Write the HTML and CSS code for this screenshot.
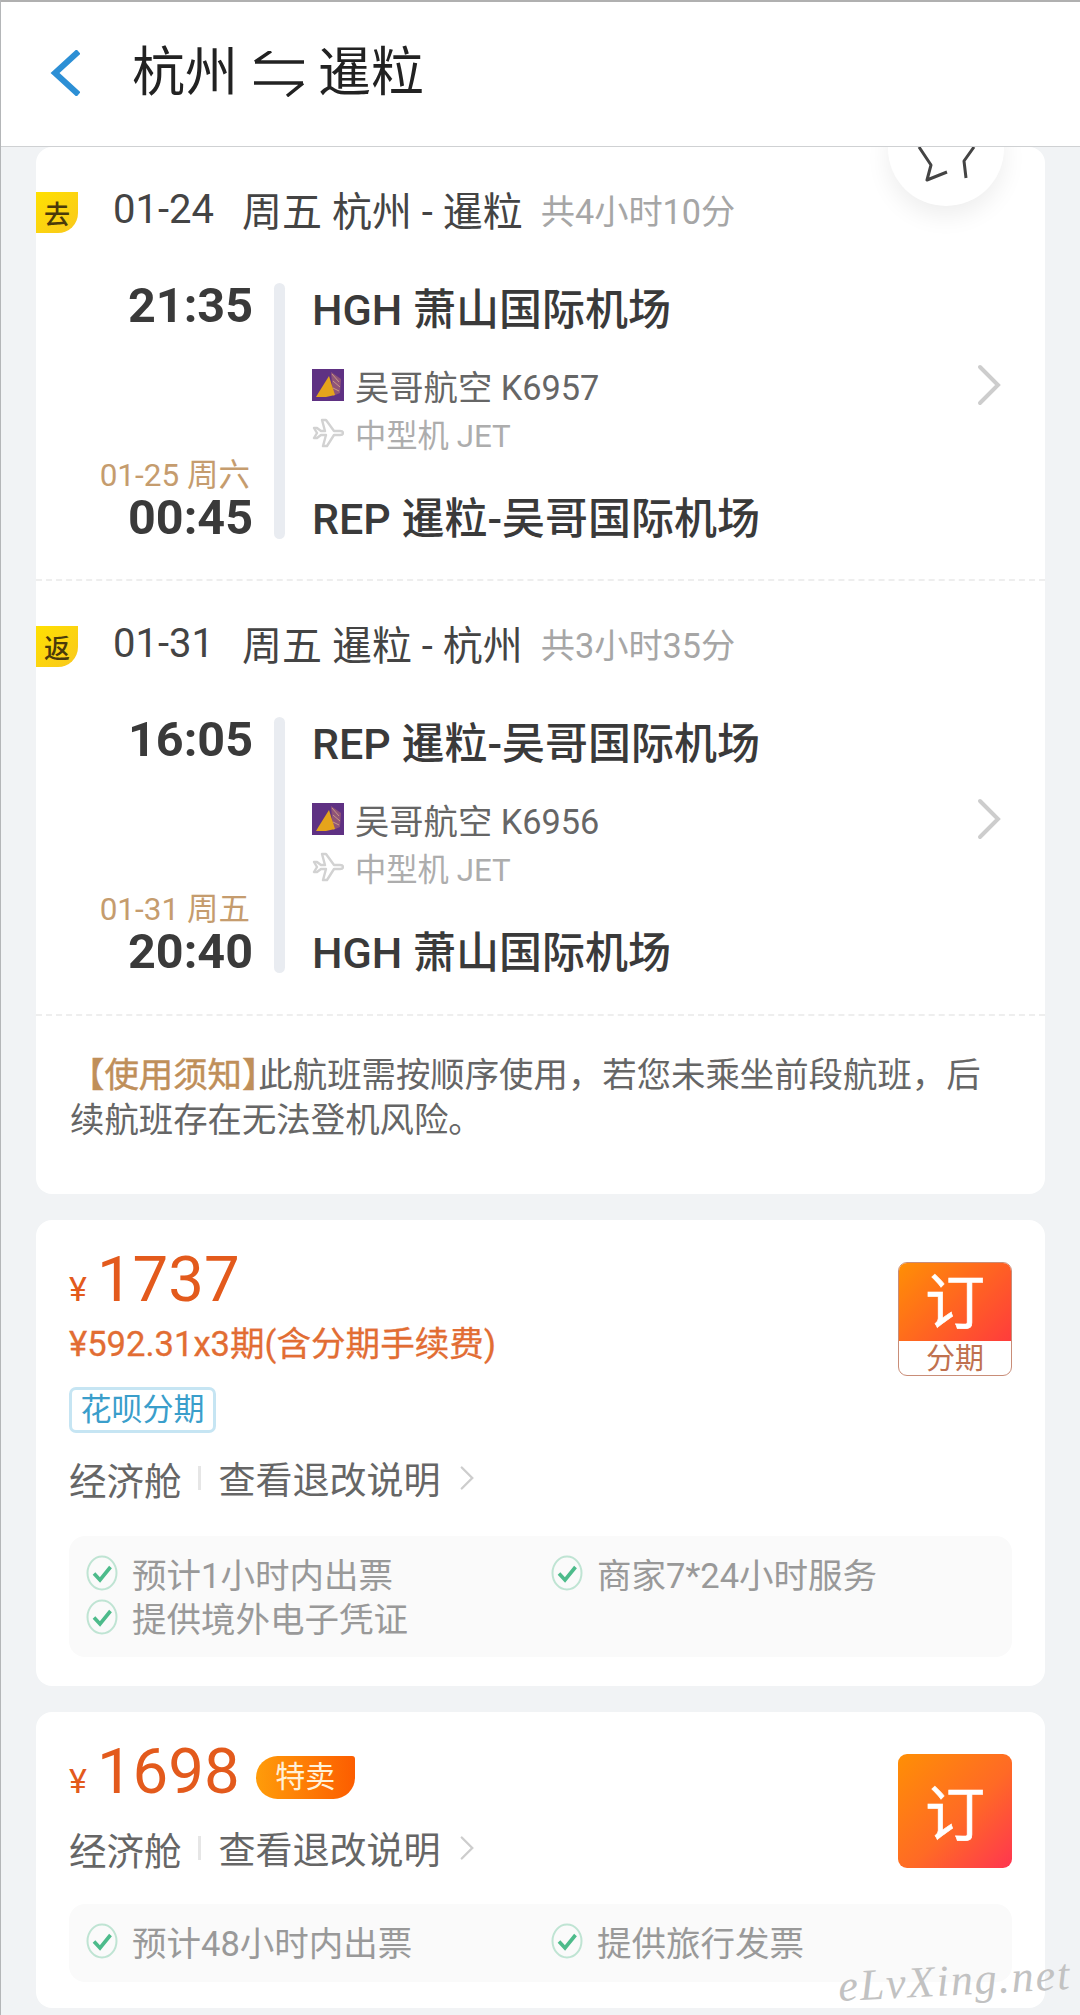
FILE: index.html
```html
<!DOCTYPE html>
<html lang="zh-CN">
<head>
<meta charset="utf-8">
<title>杭州 - 暹粒</title>
<link rel="stylesheet" href="styles.css">
</head>
<body>
<svg class="defs" width="0" height="0" aria-hidden="true">
  <defs>
    <symbol id="check" viewBox="0 0 32 36">
      <ellipse cx="16" cy="18" rx="14.5" ry="16.5" fill="none" stroke="#bfe4d3" stroke-width="2"/>
      <path d="M8 18.5l6 6.5L24.5 12" fill="none" stroke="#4dbb8b" stroke-width="3.6"/>
    </symbol>
    <symbol id="chev" viewBox="0 0 24 42">
      <path d="M3 3l18 18L3 39" fill="none" stroke="#cdcdcd" stroke-width="4" stroke-linecap="round"/>
    </symbol>
    <symbol id="logo" viewBox="0 0 32 32">
      <rect width="32" height="32" fill="#5f3183"/>
      <path d="M19 3l10 7-1 14-7 3z" fill="#8f5478"/>
      <path d="M20 5l7 8M21 12l7 6M21 19l6 3" stroke="#c99a84" stroke-width="1" fill="none"/>
      <path d="M4 28l3-5L17 7l6 19-9 2z" fill="#e5a41b"/>
    </symbol>
    <symbol id="plane" viewBox="0 0 32 32">
      <path d="M2 11l3 5-3 5h3l4-3h5l-3 11h4l7-11h6c2 0 3-1 3-2s-1-2-3-2h-6L14 3h-4l3 11H9L5 11z" fill="none" stroke="#d2d2d2" stroke-width="2.4" stroke-linejoin="round"/>
    </symbol>
  </defs>
</svg>
<div class="page">
  <header class="topbar">
    <svg class="back" width="30" height="46" viewBox="0 0 30 46"><path d="M28.500 1.500L5 23l23.500 21.500" fill="none" stroke="#2c8fd5" stroke-width="6"/></svg>
    <span class="title">杭州</span>
    <svg class="swap" width="50" height="46" viewBox="0 0 50 46"><path d="M1 11h49M1 11L17 0M0 32h49M49 32L33 45" fill="none" stroke="#222" stroke-width="3.400"/></svg>
    <span class="title">暹粒</span>
  </header>
  <main class="content">
    <section class="card flights">
      <div class="fav">
        <svg width="70" height="40" viewBox="0 0 70 40"><path d="M8 0l12 18-4 15 20-8M63 0L53 14l2 17" fill="none" stroke="#444" stroke-width="3" stroke-linejoin="round"/></svg>
      </div>

      <div class="leg">
        <div class="leg-head">
          <span class="tag">去</span>
          <span class="date">01-24</span>
          <span class="route">周五 杭州 - 暹粒</span>
          <span class="dur">共4小时10分</span>
        </div>
        <div class="leg-body">
          <div class="times">
            <div class="time">21:35</div>
            <div class="arr">
              <div class="next">01-25 周六</div>
              <div class="time">00:45</div>
            </div>
          </div>
          <div class="bar"></div>
          <div class="info">
            <div class="port">HGH 萧山国际机场</div>
            <div class="airline"><svg class="ico" width="32" height="32"><use href="#logo"/></svg><span>吴哥航空 K6957</span><svg class="more" width="24" height="42"><use href="#chev"/></svg></div>
            <div class="model"><svg class="ico" width="32" height="32"><use href="#plane"/></svg><span>中型机 JET</span></div>
            <div class="port last">REP 暹粒-吴哥国际机场</div>
          </div>
        </div>
      </div>

      <div class="leg">
        <div class="leg-head">
          <span class="tag">返</span>
          <span class="date">01-31</span>
          <span class="route">周五 暹粒 - 杭州</span>
          <span class="dur">共3小时35分</span>
        </div>
        <div class="leg-body">
          <div class="times">
            <div class="time">16:05</div>
            <div class="arr">
              <div class="next">01-31 周五</div>
              <div class="time">20:40</div>
            </div>
          </div>
          <div class="bar"></div>
          <div class="info">
            <div class="port">REP 暹粒-吴哥国际机场</div>
            <div class="airline"><svg class="ico" width="32" height="32"><use href="#logo"/></svg><span>吴哥航空 K6956</span><svg class="more" width="24" height="42"><use href="#chev"/></svg></div>
            <div class="model"><svg class="ico" width="32" height="32"><use href="#plane"/></svg><span>中型机 JET</span></div>
            <div class="port last">HGH 萧山国际机场</div>
          </div>
        </div>
      </div>

      <p class="notice"><b>【使用须知】</b>此航班需按顺序使用，若您未乘坐前段航班，后续航班存在无法登机风险。</p>
    </section>

    <section class="card offer offer-a">
      <div class="offer-top">
        <div class="offer-main">
          <div class="price"><span class="yen">¥</span><span class="num">1737</span></div>
          <div class="install">¥592.31x3期(含分期手续费)</div>
          <span class="hb">花呗分期</span>
        </div>
        <div class="btn btn-split"><span class="btn-main">订</span><span class="btn-sub">分期</span></div>
      </div>
      <div class="cabin"><span class="cab">经济舱</span><i class="sep"></i><span class="rule">查看退改说明</span><svg class="rule-chev" width="14" height="26"><use href="#chev"/></svg></div>
      <div class="perks">
        <div class="perk"><svg width="32" height="36"><use href="#check"/></svg><span>预计1小时内出票</span></div>
        <div class="perk"><svg width="32" height="36"><use href="#check"/></svg><span>商家7*24小时服务</span></div>
        <div class="perk"><svg width="32" height="36"><use href="#check"/></svg><span>提供境外电子凭证</span></div>
      </div>
    </section>

    <section class="card offer offer-b">
      <div class="offer-top">
        <div class="offer-main">
          <div class="price"><span class="yen">¥</span><span class="num">1698</span><span class="sale">特卖</span></div>
          <div class="cabin cabin-b"><span class="cab">经济舱</span><i class="sep"></i><span class="rule">查看退改说明</span><svg class="rule-chev" width="14" height="26"><use href="#chev"/></svg></div>
        </div>
        <div class="btn btn-full"><span>订</span></div>
      </div>
      <div class="perks perks-b">
        <div class="perk"><svg width="32" height="36"><use href="#check"/></svg><span>预计48小时内出票</span></div>
        <div class="perk"><svg width="32" height="36"><use href="#check"/></svg><span>提供旅行发票</span></div>
      </div>
      <span class="mark">eLvXing.net</span>
    </section>
  </main>
</div>
</body>
</html>
```

FILE: styles.css
```css
* { box-sizing: border-box; }
html, body { margin: 0; padding: 0; }
body {
  width: 1080px;
  height: 2015px;
  overflow: hidden;
  background: #f1f3f5;
  font-family: Roboto, "Noto Sans CJK SC", sans-serif;
  color: #333;
}
.defs { position: absolute; }
.page { border-left: 1px solid #b4b6b8; height: 2015px; }

.topbar {
  position: relative;
  z-index: 2;
  height: 147px;
  display: flex;
  align-items: center;
  background: #fff;
  border-top: 2px solid #b0b0b0;
  border-bottom: 1px solid #cfd1d3;
  padding: 0 0 2px 49px;
}
.back { margin-right: 52px; }
.title { font-size: 53px; line-height: 60px; color: #222; }
.swap { margin: 2px 14px 0 16px; }

.content { padding: 0 35px 0 35px; display: flex; flex-direction: column; gap: 26px; }
.card { background: #fff; border-radius: 16px; position: relative; }
.flights { height: 1047px; }

.fav {
  position: absolute;
  right: 41px;
  top: -56px;
  width: 116px;
  height: 115px;
  border-radius: 50%;
  background: #fff;
  box-shadow: 0 10px 24px rgba(0,0,0,.07);
  display: flex;
  justify-content: center;
  align-items: flex-end;
  padding-bottom: 19px;
}

.leg { height: 434px; border-bottom: 2px dashed #eeeeee; }
.leg + .leg { height: 435px; }
.leg-head { height: 44px; position: relative; top: 40px; display: flex; align-items: center; }
.tag {
  width: 42px;
  height: 41px;
  margin-top: 6px;
  background: linear-gradient(135deg, #ffe000, #f9c81e);
  border-bottom-right-radius: 20px;
  font-size: 26px;
  font-weight: 500;
  color: #4a3a0a;
  display: flex;
  align-items: center;
  justify-content: center;
}
.date { font-size: 40px; color: #444; margin-left: 35px; }
.route { font-size: 40px; color: #444; margin-left: 28px; }
.dur { font-size: 34.200px; color: #a6a6a6; margin-left: 18px; }

.leg-body { display: flex; padding: 96px 44px 0 0; }
.times {
  width: 217px;
  height: 256px;
  margin-top: -3px;
  display: flex;
  flex-direction: column;
  justify-content: space-between;
  text-align: right;
}
.time { font-size: 48.500px; line-height: 44px; font-weight: 700; color: #3a3a3a; }
.next { font-size: 31.500px; line-height: 40px; color: #c59c6e; padding-right: 3px; white-space: nowrap; }
.bar { width: 11px; height: 256px; margin: -4px 0 0 21px; border-radius: 6px; background: #e9ecf1; }
.info { flex: 1; margin-left: 27px; display: flex; flex-direction: column; }
.port { font-size: 43px; line-height: 46px; font-weight: 500; color: #3a3a3a; white-space: nowrap; }
.port.last { margin-top: 41px; }
.airline { display: flex; align-items: center; height: 42px; margin-top: 31px; font-size: 34.300px; color: #666; }
.model { display: flex; align-items: center; height: 44px; margin-top: 5px; font-size: 31.300px; color: #adadad; }
.ico { margin-right: 11px; flex: none; }
.more { margin-left: auto; }

.notice {
  margin: 0;
  padding: 37px 45px 0 34px;
  font-size: 34.400px;
  line-height: 45px;
  color: #666;
}
.notice b { font-weight: 400; color: #bf8f5a; -webkit-text-stroke: .5px #bf8f5a; margin-right: -18px; }

.offer-a { height: 466px; }
.offer-b { height: 296px; }
.offer { padding: 0 33px 0 33px; }
.offer-top { display: flex; justify-content: space-between; align-items: flex-start; padding-top: 24px; }
.offer-a .offer-top { height: 213px; }
.offer-b .offer-top { height: 192px; }
.offer-main { display: flex; flex-direction: column; align-items: flex-start; }

.price { display: flex; align-items: baseline; height: 72px; line-height: 72px; color: #e35a1c; }
.yen { font-size: 34px; margin-right: 10px; }
.num { font-size: 63.500px; }
.install { margin-top: 6px; font-size: 34.600px; line-height: 44px; color: #e26d33; -webkit-text-stroke: .3px #e26d33; white-space: nowrap; }
.hb {
  margin-top: 21px;
  width: 147px;
  height: 46px;
  line-height: 40px;
  text-align: center;
  font-size: 31px;
  color: #3a9ecb;
  border: 3px solid #c6e5f3;
  border-radius: 7px;
}
.sale {
  align-self: center;
  margin: 10px 0 0 16px;
  width: 99px;
  height: 43px;
  line-height: 42px;
  text-align: center;
  font-size: 30px;
  color: #fff1d8;
  background: linear-gradient(90deg, #ff9c0a, #fc5d00);
  border-radius: 22px 3px 22px 22px;
}

.cabin { display: flex; align-items: center; height: 52px; margin-top: 19px; }
.cabin-b { margin-top: 14px; }
.cab { font-size: 37.500px; color: #666; }
.sep { width: 3px; height: 24px; background: #e6e6e6; margin: 0 18px 0 16px; }
.rule { font-size: 37px; color: #666; }
.rule-chev { margin-left: 19px; }

.btn { width: 114px; height: 114px; border-radius: 9px; flex: none; margin-top: 18px; overflow: hidden; color: #fff; }
.btn-split { display: flex; flex-direction: column; border: 1px solid #c98d78; background: #fff; }
.btn-main {
  height: 78px;
  line-height: 82px;
  text-align: center;
  font-size: 60px;
  -webkit-text-stroke: .6px #fff;
  background: linear-gradient(135deg, #ff8f05, #ff3c3c);
}
.btn-sub { flex: 1; line-height: 37px; text-align: center; font-size: 29px; color: #c0714f; }
.btn-full {
  display: flex;
  align-items: center;
  justify-content: center;
  padding-bottom: 3px;
  font-size: 60px;
  -webkit-text-stroke: .6px #fff;
  background: linear-gradient(135deg, #ff8f05 0%, #ff6a25 55%, #ff3550 100%);
}

.perks {
  margin-top: 32px;
  height: 121px;
  background: #fafafa;
  border-radius: 16px;
  padding: 15px 17px;
  display: grid;
  grid-template-columns: 465px 1fr;
  grid-auto-rows: 44px;
}
.perks-b { height: 78px; padding-top: 15px; margin-top: 0; }
.perk { display: flex; align-items: center; gap: 14px; font-size: 34.500px; color: #999; white-space: nowrap; }

.mark {
  position: absolute;
  right: -26px;
  bottom: 2px;
  font-family: "Liberation Serif", serif;
  font-style: italic;
  font-size: 44px;
  letter-spacing: 2px;
  color: #c2c2c2;
  transform: rotate(-3deg);
}
```
